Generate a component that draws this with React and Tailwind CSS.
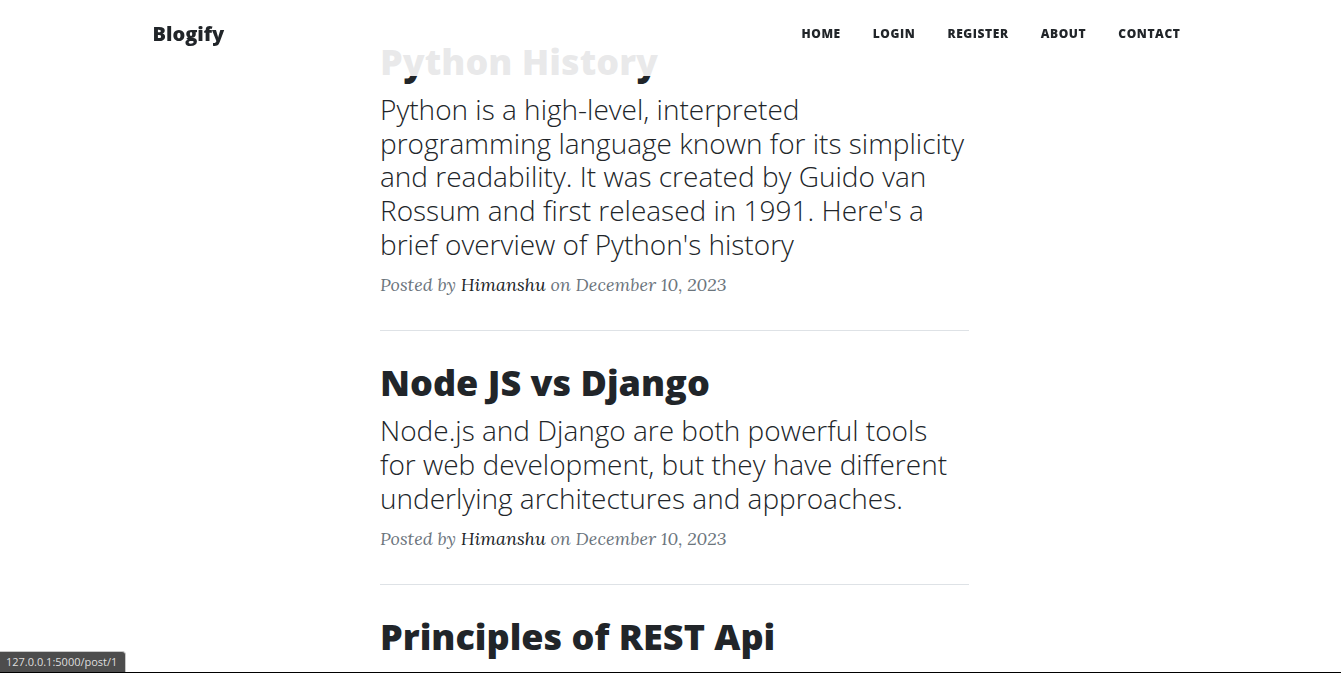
const navItems = ["Home", "Login", "Register", "About", "Contact"];

const posts = [
  {
    title: "Python History",
    subtitle:
      "Python is a high-level, interpreted programming language known for its simplicity and readability. It was created by Guido van Rossum and first released in 1991. Here's a brief overview of Python's history",
    author: "Himanshu",
    date: "December 10, 2023",
  },
  {
    title: "Node JS vs Django",
    subtitle:
      "Node.js and Django are both powerful tools for web development, but they have different underlying architectures and approaches.",
    author: "Himanshu",
    date: "December 10, 2023",
  },
  { title: "Principles of REST Api" },
];

function Navbar() {
  return (
    <header className="fixed inset-x-0 top-0 z-10 bg-white/90 pl-2">
      <nav className="mx-auto flex max-w-[1044px] items-center justify-between pt-[17px] pb-[25px]">
        <a href="#" className="text-xl leading-[30px] font-extrabold">
          Blogify
        </a>
        <ul className="flex">
          {navItems.map((item) => (
            <li key={item}>
              <a
                href={"#" + item.toLowerCase()}
                className="block px-4 py-2 text-xs leading-[18px] font-extrabold tracking-wider uppercase"
              >
                {item}
              </a>
            </li>
          ))}
        </ul>
      </nav>
    </header>
  );
}

function PostPreview({ post, id }) {
  return (
    <article>
      <a href={"#post-" + id} className="block">
        <h2 className="text-4xl leading-[1.2] font-extrabold">{post.title}</h2>
        {post.subtitle && (
          <h3 className="mt-2.5 text-[28px] leading-[1.2] font-light">{post.subtitle}</h3>
        )}
      </a>
      {post.author && (
        <p className="mt-2 mb-[30px] font-['Lora','Liberation_Serif',serif] text-lg leading-[31px] text-[#6c757d] italic">
          Posted by{" "}
          <a href="#author" className="text-[#212529]">
            {post.author}
          </a>{" "}
          on {post.date}
        </p>
      )}
    </article>
  );
}

export default function App() {
  return (
    <div className="flex h-screen flex-col overflow-hidden border-b border-black bg-white font-['Open_Sans',sans-serif] text-[#212529]">
      <Navbar />
      <main className="pt-10 pl-2">
        <div className="mx-auto flex max-w-[589px] flex-col">
          {posts.map((post, i) => [
            i > 0 && <hr key={"rule" + i} className="mb-[30px] border-[#dee2e6]" />,
            <PostPreview key={i} post={post} id={i + 1} />,
          ])}
        </div>
      </main>
      <div
        role="status"
        className="fixed bottom-px left-0 rounded-tr border-t border-r border-[#c8c8c8] bg-[#4d4d4d] pr-2 pl-1.5 text-[11px] leading-5 text-[#dedede]"
      >
        127.0.0.1:5000/post/1
      </div>
    </div>
  );
}
